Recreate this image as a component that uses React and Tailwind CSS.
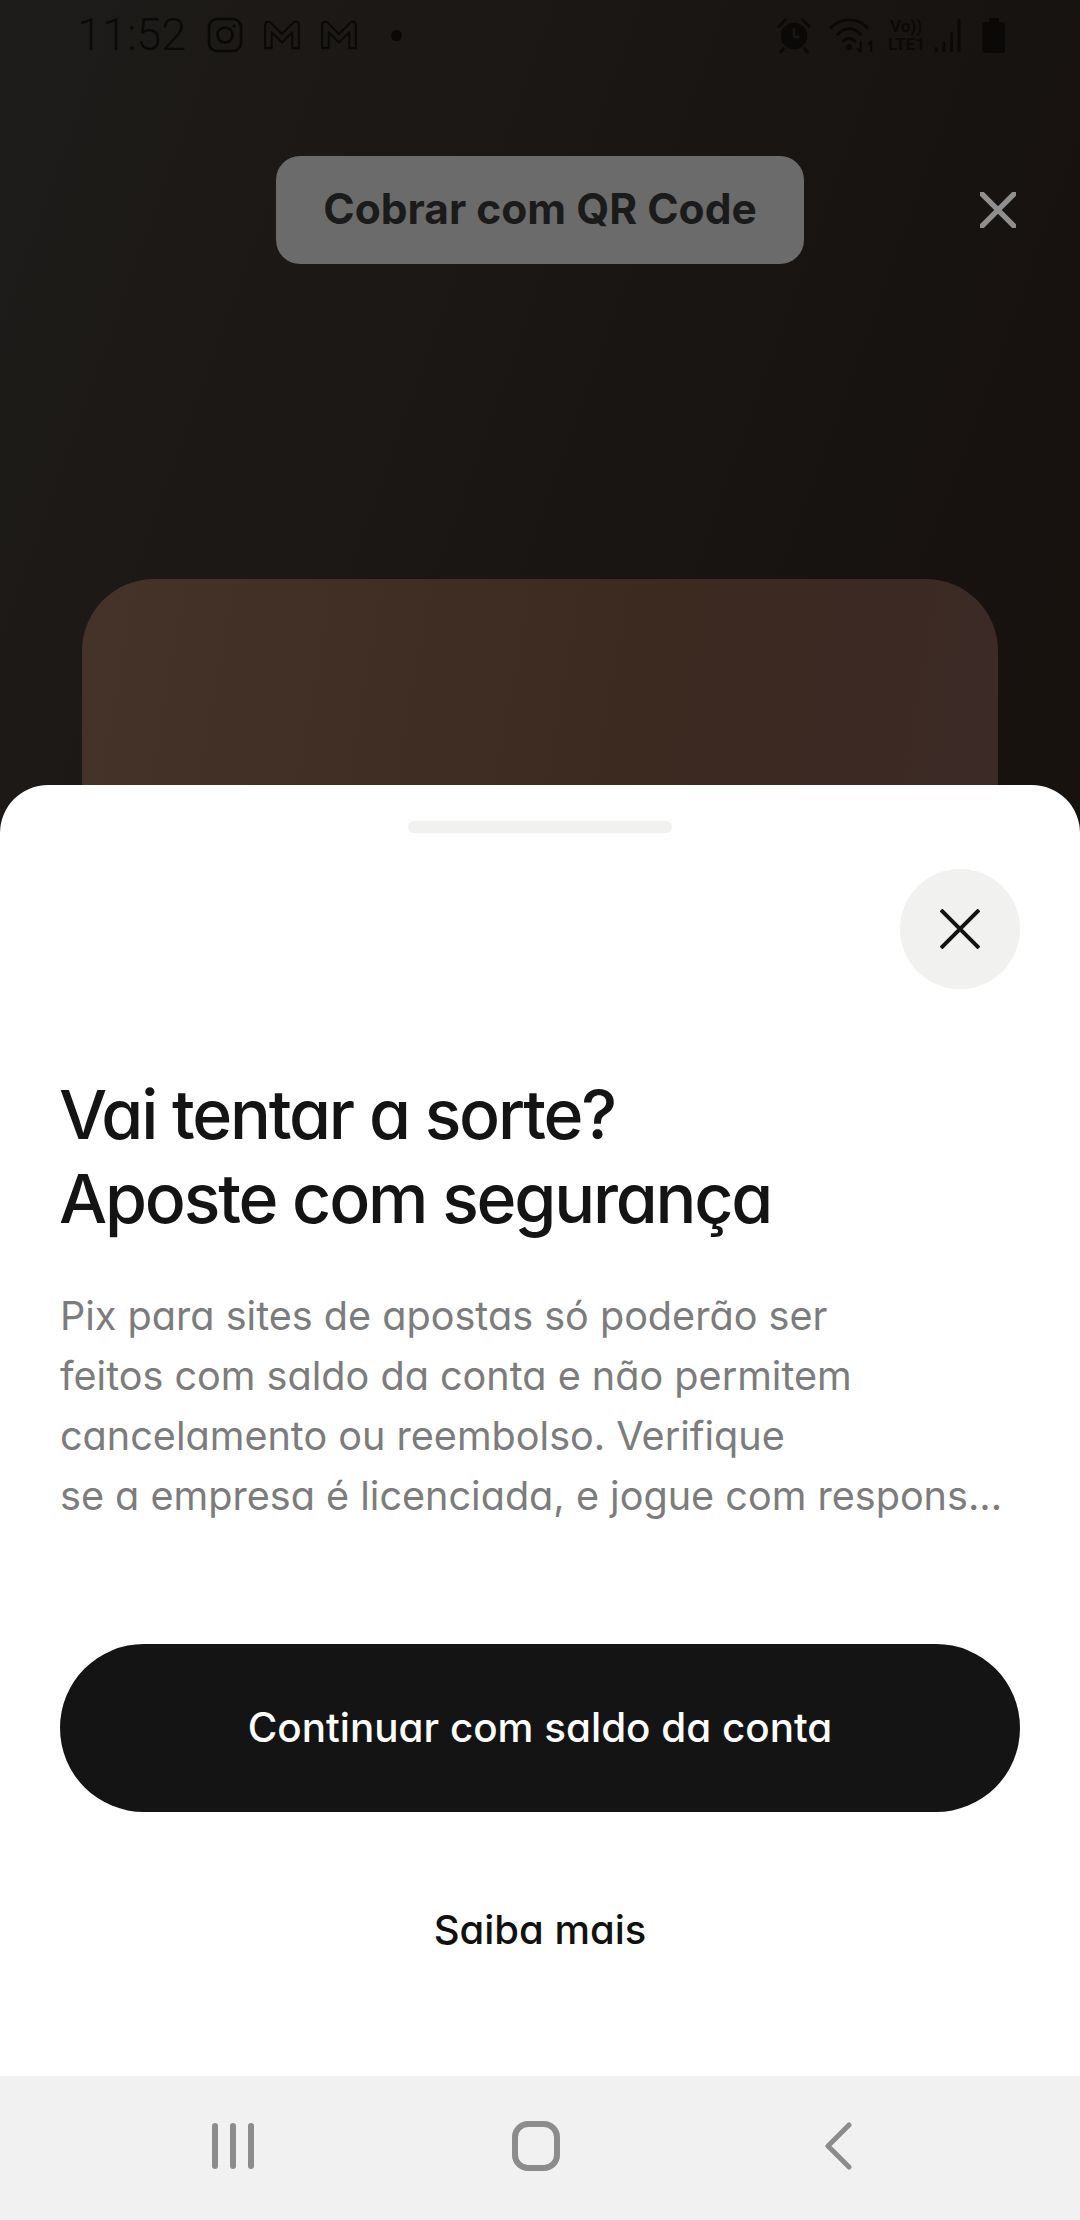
const font = { fontFamily: 'Inter, sans-serif', fontFeatureSettings: '"cv11" 1' };

function Alarm() {
  return (
    <svg width="38" height="38" viewBox="0 0 40 40" fill="#0b0908">
      <circle cx="20" cy="21" r="14" />
      <path d="M4 11 L11 4 M29 4 L36 11 M9 34 L6 38 M31 34 L34 38" stroke="#0b0908" strokeWidth="3" strokeLinecap="round" />
      <path d="M20 13 V22 H26" fill="none" stroke="#1a1715" strokeWidth="2.5" />
    </svg>
  );
}

function Wifi() {
  return (
    <svg width="48" height="37" viewBox="0 0 50 38" fill="none" stroke="#0b0908" strokeWidth="3" strokeLinecap="round">
      <path d="M2 11 C12 0 30 0 40 11" />
      <path d="M9 18 C16 10 26 10 33 18" />
      <path d="M15 25 C19 21 23 21 27 25" />
      <circle cx="21" cy="31" r="1.5" fill="#0b0908" />
      <path d="M33 26 V36 M33 36 L30 33 M44 25 V35 M44 25 L41 28" strokeWidth="2.2" />
    </svg>
  );
}

function Signal() {
  return (
    <svg width="34" height="36" viewBox="0 0 34 38" fill="#0b0908">
      <rect x="1" y="32" width="3" height="5" />
      <rect x="9" y="26" width="3" height="11" />
      <rect x="17" y="16" width="3" height="21" />
      <rect x="25" y="2" width="3" height="35" />
    </svg>
  );
}

function M() {
  return (
    <svg width="38" height="30" viewBox="0 0 40 32" fill="none" stroke="#0b0908" strokeWidth="2.2" strokeLinejoin="round">
      <path d="M2 30 V5 Q2 2 5 2 H7 L20 15 L33 2 H35 Q38 2 38 5 V30 H31 V13 L20 24 L9 13 V30 Z" />
    </svg>
  );
}

function X({ color, width, size, strokeWidth }) {
  return (
    <svg width={size} height={size} viewBox="0 0 40 40" fill="none" stroke={color} strokeWidth={strokeWidth} strokeLinecap={width}>
      <path d="M1 1 L39 39 M39 1 L1 39" />
    </svg>
  );
}

export default function App() {
  return (
    <div className="flex h-[2220px] w-[1080px] flex-col overflow-hidden bg-[linear-gradient(110deg,#1e1c1a_0%,#171310_55%,#1a100e_100%)]" style={font}>
      <div className="flex h-[785px] shrink-0 flex-col overflow-hidden">
        <div className="flex h-[70px] shrink-0 items-center justify-between pl-[77px] pr-[75px] text-[#0b0908]">
          <div className="flex items-center">
            <span className="text-[45px] font-light leading-[50px]" style={{ fontFamily: 'Roboto, sans-serif' }}>11:52</span>
            <svg className="ml-[21px]" width="36" height="36" viewBox="0 0 36 36" fill="none" stroke="#0b0908" strokeWidth="2.6">
              <rect x="2" y="2" width="32" height="32" rx="8" />
              <circle cx="18" cy="18" r="7.5" />
              <circle cx="27" cy="9" r="1.5" fill="#0b0908" stroke="none" />
            </svg>
            <span className="ml-[20px] flex"><M /></span>
            <span className="ml-[19px] flex"><M /></span>
            <span className="ml-[33px] h-[11px] w-[11px] rounded-full bg-[#0b0908]" />
          </div>
          <div className="flex items-center">
            <Alarm />
            <span className="ml-[16px] flex"><Wifi /></span>
            <span className="ml-[11px] flex flex-col text-[17px] font-semibold leading-[18px]" style={{ fontFamily: 'Roboto, sans-serif' }}>
              <span className="pl-[2px]">Vo))</span>
              <span>LTE1</span>
            </span>
            <span className="ml-[8px] flex"><Signal /></span>
            <span className="ml-[15px] flex flex-col items-center">
              <span className="h-[4px] w-[10px] bg-[#0b0908]" />
              <span className="h-[31px] w-[23px] rounded-[3px] bg-[#0b0908]" />
            </span>
          </div>
        </div>
        <div className="relative mt-[86px] flex justify-center">
          <div className="flex h-[108px] w-[528px] items-center justify-center rounded-[24px] bg-[#6b6b6b] pb-[2px] text-[42.5px] font-bold text-[#1b1b1b] [font-feature-settings:normal]">
            Cobrar com QR Code
          </div>
          <div className="absolute right-[64px] top-[36px]">
            <X color="#8f8f8f" size={36} strokeWidth={6} width="round" />
          </div>
        </div>
        <div className="mx-[82px] mt-[315px] h-[400px] shrink-0 rounded-[72px] bg-[linear-gradient(100deg,#453228_0%,#3c2920_60%,#3c2a27_100%)]" />
      </div>
      <div className="flex flex-1 flex-col rounded-t-[48px] bg-white px-[60px]">
        <div className="mx-auto mt-[36px] h-[12px] w-[264px] shrink-0 rounded-full bg-[#f1f1ef]" />
        <div className="mt-[36px] flex justify-end">
          <div className="flex h-[120px] w-[120px] items-center justify-center rounded-full bg-[#f1f1ef]">
            <X color="#141414" size={40} strokeWidth={4} width="butt" />
          </div>
        </div>
        <h1 className="-ml-[1px] mt-[83px] text-[68px] font-[550] leading-[84px] tracking-[-2.2px] text-[#141414]">
          Vai tentar a sorte?<br />Aposte com segurança
        </h1>
        <p className="mt-[46px] whitespace-nowrap text-[39.6px] leading-[60px] text-[#7c7c7c]">
          Pix para sites de apostas só poderão ser<br />
          feitos com saldo da conta e não permitem<br />
          cancelamento ou reembolso. Verifique<br />
          se a empresa é licenciada, e jogue com respons...
        </p>
        <div className="mt-[118px] flex h-[168px] shrink-0 items-center justify-center rounded-full bg-[#141414] text-[40.4px] font-medium text-white">
          Continuar com saldo da conta
        </div>
        <div className="mt-[88px] text-center text-[40px] font-medium leading-[60px] text-[#111111]">Saiba mais</div>
      </div>
      <div className="flex h-[144px] shrink-0 items-center justify-between bg-[#f1f1f1] pl-[210px] pr-[228px] pb-[4px]">
        <svg width="46" height="48" viewBox="0 0 46 48" fill="#8c8c8c">
          <rect x="2" y="1" width="6" height="46" rx="3" />
          <rect x="20" y="1" width="6" height="46" rx="3" />
          <rect x="38" y="1" width="6" height="46" rx="3" />
        </svg>
        <svg className="ml-[-8px]" width="48" height="50" viewBox="0 0 48 50" fill="none" stroke="#8c8c8c" strokeWidth="6">
          <rect x="3" y="3" width="42" height="44" rx="13" />
        </svg>
        <svg width="28" height="48" viewBox="0 0 28 48" fill="none" stroke="#8c8c8c" strokeWidth="5" strokeLinecap="round" strokeLinejoin="round">
          <path d="M25 3 L4 24 L25 45" />
        </svg>
      </div>
    </div>
  );
}
